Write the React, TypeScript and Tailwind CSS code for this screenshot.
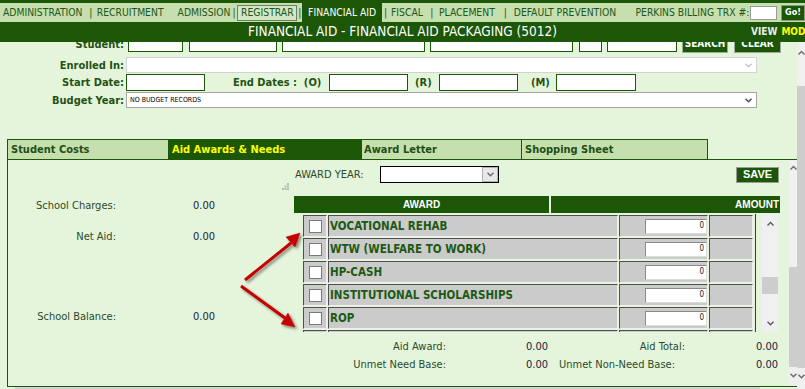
import React from "react";

const F = "font-['DejaVu_Sans_Condensed','DejaVu_Sans',sans-serif]";
const A = "font-['Liberation_Sans',Arial,sans-serif]";

const awards = [
  "VOCATIONAL REHAB",
  "WTW (WELFARE TO WORK)",
  "HP-CASH",
  "INSTITUTIONAL SCHOLARSHIPS",
  "ROP",
  "",
];

function Chev({ up = false, color = "#5a5a5a" }: { up?: boolean; color?: string }) {
  return (
    <svg width="7" height="5" viewBox="0 0 7 5">
      <path
        d={up ? "M0.5 4.5 L3.5 1.5 L6.5 4.5" : "M0.5 0.8 L3.5 3.8 L6.5 0.8"}
        stroke={color}
        strokeWidth="1.4"
        fill="none"
      />
    </svg>
  );
}

function Cell({ className, children }: { className: string; children?: React.ReactNode }) {
  return (
    <div
      className={
        "h-full bg-[#cbcbcb] border border-t-[#4f4f4f] border-l-[#4f4f4f] border-b-[#efefef] border-r-[#efefef] " +
        className
      }
    >
      {children}
    </div>
  );
}

export default function App() {
  return (
    <div className={"relative w-[805px] h-[389px] overflow-hidden bg-[#e5f5dc] " + F}>
      {/* top menu */}
      <div className="h-[3px] bg-[#1b5706]" />
      <div className="h-[19px] bg-[#c5dfae] flex items-center text-[10.3px] text-[#1c561c] whitespace-nowrap leading-none">
        <span className="ml-[3px] w-[82px]">ADMINISTRATION</span>
        <span className="w-[12px] text-center">|</span>
        <span className="w-[81px]">RECRUITMENT</span>
        <span className="w-[55px]">ADMISSION</span>
        <span className="w-[5px]">|</span>
        <span className="w-[60px] h-[16px] flex items-center justify-center border border-[#6b7f62] bg-[#d3e8c2]">REGISTRAR</span>
        <span className="w-[5px] text-center">|</span>
        <span className="w-[80px] h-[19px] flex items-center justify-center bg-[#1b5706] text-white">FINANCIAL AID</span>
        <span className="w-[7px] text-center">|</span>
        <span className="w-[39px] pl-[2px]">FISCAL</span>
        <span className="w-[8px] text-center">|</span>
        <span className="w-[65px] pl-[3px]">PLACEMENT</span>
        <span className="w-[9px] text-center">|</span>
        <span className="w-[126px] pl-[4px]">DEFAULT PREVENTION</span>
        <span className="w-[115px]">PERKINS BILLING TRX #:</span>
        <span className="w-[27px] h-[14px] bg-white border border-[#9a9a9a]" />
        <span className="ml-[4px] w-[24px] h-[16px] flex items-center justify-center bg-[#1b5706] border border-[#8a9a80] text-white font-bold text-[9px]">Go!</span>
      </div>

      {/* title */}
      <div className="relative h-[20px] bg-[#1b5706] flex items-center justify-center text-white text-[13.5px] leading-none">
        FINANCIAL AID - FINANCIAL AID PACKAGING (5012)
        <div className="absolute left-[751px] top-[5px] flex gap-[4px] text-[10px] font-bold">
          <span className="text-[#e8eef0]">VIEW</span>
          <span className="text-[#ffff00]">MODE</span>
        </div>
      </div>

      {/* body */}
      <div className="flex h-[347px]">
        <div className="w-[797px] h-full overflow-hidden">
          <div className="-mt-[10px] pt-[3px]">
            {/* Student */}
            <div className="h-[18px] flex items-start text-[11px] leading-none">
              <span className="w-[125px] pr-[1px] text-right font-bold text-[#1f5214] self-center">Student:</span>
              <span className="ml-[3px] w-[55px] h-[17px] bg-white border border-[#1b5706]" />
              <span className="ml-[6px] w-[88px] h-[17px] bg-white border border-[#1b5706]" />
              <span className="ml-[5px] w-[143px] h-[17px] bg-white border border-[#1b5706]" />
              <span className="ml-[5px] w-[143px] h-[17px] bg-white border border-[#1b5706]" />
              <span className="ml-[6px] w-[23px] h-[17px] bg-white border border-[#1b5706]" />
              <span className="ml-[5px] w-[70px] h-[17px] bg-white border border-[#1b5706]" />
              <span className="ml-[5px] w-[46px] h-[18px] flex items-center justify-center bg-[#1b5706] border border-[#a0a8a0] text-white font-bold text-[10px]">SEARCH</span>
              <span className="ml-[6px] w-[47px] h-[18px] flex items-center justify-center bg-[#1b5706] border border-[#a0a8a0] text-white font-bold text-[10px]">CLEAR</span>
            </div>

            {/* Enrolled In */}
            <div className="mt-[4px] h-[16px] flex items-center text-[11px] leading-none">
              <span className="w-[125px] pr-[1px] text-right font-bold text-[#1f5214]">Enrolled In:</span>
              <div className="ml-[1px] w-[631px] h-[16px] bg-white border border-[#d2d2d2] flex items-center justify-end pr-[4px]">
                <Chev color="#c4c4c4" />
              </div>
            </div>

            {/* Start Date */}
            <div className="mt-[1px] h-[17px] flex items-center text-[11px] leading-none font-bold text-[#1f5214]">
              <span className="w-[125px] pr-[1px] text-right">Start Date:</span>
              <span className="ml-[1px] w-[79px] h-[17px] bg-white border border-[#1b5706]" />
              <span className="ml-[28px] w-[96px]">End Dates :&nbsp; (O)</span>
              <span className="w-[79px] h-[17px] bg-white border border-[#1b5706]" />
              <span className="ml-[7px] w-[24px]">(R)</span>
              <span className="w-[79px] h-[17px] bg-white border border-[#1b5706]" />
              <span className="ml-[13px] w-[25px]">(M)</span>
              <span className="w-[80px] h-[17px] bg-white border border-[#1b5706]" />
            </div>

            {/* Budget Year */}
            <div className="mt-[1px] h-[16px] flex items-center text-[11px] leading-none">
              <span className="w-[125px] pr-[1px] text-right font-bold text-[#1f5214]">Budget Year:</span>
              <div className="ml-[1px] w-[631px] h-[16px] bg-white border border-[#a5a5a5] flex items-center justify-between pl-[3px] pr-[4px]">
                <span className="text-[7px] text-black">NO BUDGET RECORDS</span>
                <Chev color="#4a4a4a" />
              </div>
            </div>

            {/* tabs */}
            <div className="mt-[31px] ml-[7px] h-[20px] flex text-[11px] font-bold leading-none">
              <div className="w-[161px] h-full flex items-center pl-[3px] bg-[#c5dfae] text-[#1f4f14] border-t border-l border-[#1b5706]">Student Costs</div>
              <div className="w-[193px] h-full flex items-center pl-[3px] bg-[#1b5706] text-[#ffff00] border-t border-l border-[#1b5706]">Aid Awards &amp; Needs</div>
              <div className="w-[160px] h-full flex items-center pl-[2px] bg-[#c5dfae] text-[#1f4f14] border-t border-l border-[#1b5706]">Award Letter</div>
              <div className="w-[187px] h-full flex items-center pl-[3px] bg-[#c5dfae] text-[#1f4f14] border-t border-l border-r border-[#1b5706]">Shopping Sheet</div>
            </div>

            {/* panel */}
            <div className="ml-[7px] w-[790px] h-[228px] border-t border-l border-b border-[#1b5706] flex">
              <div className="w-[781px] h-full flex">
                {/* left summary */}
                <div className="w-[286px] flex flex-col text-[11px] leading-none">
                  <div className="mt-[23px] h-[7px] flex justify-end pr-[5px]">
                    <svg width="7" height="7" viewBox="0 0 7 7">
                      <rect x="5" y="0" width="2" height="2" fill="#b5bcb0" />
                      <rect x="2.5" y="2.5" width="2" height="2" fill="#b5bcb0" />
                      <rect x="5" y="2.5" width="2" height="2" fill="#b5bcb0" />
                      <rect x="0" y="5" width="2" height="2" fill="#b5bcb0" />
                      <rect x="2.5" y="5" width="2" height="2" fill="#b5bcb0" />
                      <rect x="5" y="5" width="2" height="2" fill="#b5bcb0" />
                    </svg>
                  </div>
                  <div className="mt-[8px] h-[14px] flex items-center">
                    <span className="w-[108px] text-right text-[#2b4a2b]">School Charges:</span>
                    <span className="ml-[77px] text-[#1a1a40]">0.00</span>
                  </div>
                  <div className="mt-[17px] h-[14px] flex items-center">
                    <span className="w-[108px] text-right text-[#2b4a2b]">Net Aid:</span>
                    <span className="ml-[77px] text-[#1a1a40]">0.00</span>
                  </div>
                  <div className="mt-[66px] h-[14px] flex items-center">
                    <span className="w-[108px] text-right text-[#2b4a2b]">School Balance:</span>
                    <span className="ml-[77px] text-[#1a1a40]">0.00</span>
                  </div>
                </div>

                {/* right awards */}
                <div className="flex-1 flex flex-col pt-[6px] text-[11px] leading-none">
                  <div className="h-[17px] flex items-center">
                    <span className="ml-[1px] w-[85px] text-[#2b4a2b]">AWARD YEAR:</span>
                    <div className="w-[119px] h-[17px] bg-white border border-black flex justify-end">
                      <div className="w-[16px] h-full bg-[#e8e8e8] border border-[#b0b0b0] flex items-center justify-center">
                        <Chev color="#6a6a6a" />
                      </div>
                    </div>
                    <div className={"ml-auto mr-[10px] w-[43px] h-[16px] flex items-center justify-center bg-[#1b5706] border border-[#9a9a9a] text-white font-bold text-[11px] " + A}>
                      SAVE
                    </div>
                  </div>

                  <div className={"mt-[13px] h-[17px] w-[486px] flex text-white font-bold text-[10px] " + A}>
                    <div className="w-[255px] h-full bg-[#1b5706] flex items-center justify-center">AWARD</div>
                    <div className="w-[2px] h-full bg-[#e5f5dc]" />
                    <div className="flex-1 h-full bg-[#1b5706] flex items-center justify-end pr-[1px]">AMOUNT</div>
                  </div>

                  <div className="mt-[1px] ml-[8px] w-[477px] h-[118px] flex">
                    <div className="w-[454px] h-full border-r border-[#3a3a3a] overflow-hidden pt-[1px] pl-[1px] flex flex-col gap-[1px]">
                      {awards.map((a, i) => (
                        <div key={i} className="h-[22px] shrink-0 flex gap-[1px]">
                          <Cell className="w-[24px] flex items-center justify-center">
                            <div className="w-[13px] h-[13px] bg-white border border-[#7a7a7a]" />
                          </Cell>
                          <Cell className="w-[290px] flex items-center pl-[1px] pt-[1px]">
                            <span className="font-bold text-[11.5px] text-[#1c5a14]">{a}</span>
                          </Cell>
                          <Cell className="w-[89px] flex items-center justify-end">
                            <div className="w-[62px] h-[15px] bg-white border border-t-[#8a8a8a] border-l-[#8a8a8a] border-b-[#dcdcdc] border-r-[#dcdcdc] flex items-center justify-end pr-[2px] text-[8px] text-[#202020]">
                              0
                            </div>
                          </Cell>
                          <Cell className="w-[44px]" />
                        </div>
                      ))}
                    </div>
                    <div className="ml-[6px] w-[16px] h-full bg-[#f0f0f0] flex flex-col items-center">
                      <div className="mt-[7px]"><Chev up color="#5a5a5a" /></div>
                      <div className="mt-[51px] w-[16px] h-[17px] bg-[#cdcdcd]" />
                      <div className="mt-auto mb-[6px]"><Chev color="#5a5a5a" /></div>
                    </div>
                  </div>

                  <div className="mt-[7px] h-[14px] flex items-center">
                    <span className="w-[152px] text-right text-[#2b4a2b]">Aid Award:</span>
                    <span className="w-[102px] text-right text-[#1a1a40]">0.00</span>
                    <span className="w-[137px] text-right text-[#2b4a2b]">Aid Total:</span>
                    <span className="w-[93px] text-right text-[#1a1a40]">0.00</span>
                  </div>
                  <div className="mt-[4px] h-[14px] flex items-center">
                    <span className="w-[152px] text-right text-[#2b4a2b]">Unmet Need Base:</span>
                    <span className="w-[102px] text-right text-[#1a1a40]">0.00</span>
                    <span className="w-[127px] text-right text-[#2b4a2b]">Unmet Non-Need Base:</span>
                    <span className="w-[103px] text-right text-[#1a1a40]">0.00</span>
                  </div>
                </div>
              </div>

              {/* inner scrollbar */}
              <div className="w-[8px] h-full bg-[#f0f0f0] flex flex-col items-center">
                <div className="mt-[5px]"><Chev up color="#6a6a6a" /></div>
                <div className="mt-[97px] w-[8px] h-[100px] bg-[#cdcdcd]" />
                <div className="mt-[6px]"><Chev color="#6a6a6a" /></div>
              </div>
            </div>
            <div className="ml-[15px] w-[745px] h-[2px] bg-[#d4d4d4]" />
          </div>
        </div>

        {/* page scrollbar */}
        <div className="w-[8px] h-full bg-[#f0f0f0] flex flex-col items-center">
          <div className="mt-[8px]"><Chev up color="#6a6a6a" /></div>
          <div className="mt-[31px] w-[8px] h-[282px] bg-[#cdcdcd]" />
          <div className="mt-[6px]"><Chev color="#6a6a6a" /></div>
        </div>
      </div>

      {/* annotation arrows */}
      <svg className="absolute left-0 top-0 pointer-events-none" width="805" height="389" viewBox="0 0 805 389">
        <defs>
          <filter id="sh" x="-20%" y="-20%" width="140%" height="140%">
            <feGaussianBlur in="SourceAlpha" stdDeviation="1.5" />
            <feOffset dx="2" dy="2" result="b" />
            <feComponentTransfer><feFuncA type="linear" slope="0.45" /></feComponentTransfer>
            <feMerge>
              <feMergeNode />
              <feMergeNode in="SourceGraphic" />
            </feMerge>
          </filter>
        </defs>
        <g filter="url(#sh)" fill="#c40000" stroke="#c40000">
          <line x1="245" y1="280" x2="291" y2="243" strokeWidth="3" />
          <polygon points="300,233 295,247 286,237" strokeWidth="0.5" />
          <line x1="241" y1="286" x2="285" y2="318" strokeWidth="3" />
          <polygon points="295,327 281,324 288,313" strokeWidth="0.5" />
        </g>
      </svg>
    </div>
  );
}
